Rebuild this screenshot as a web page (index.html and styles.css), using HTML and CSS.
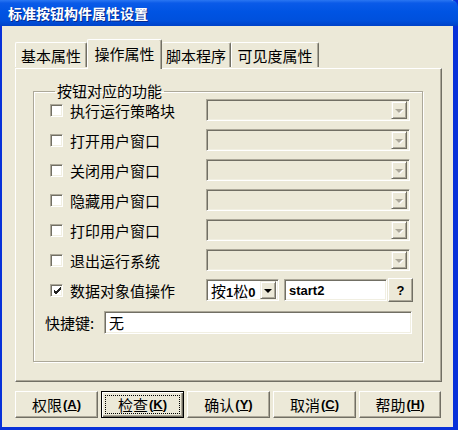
FILE: index.html
```html
<!DOCTYPE html>
<html lang="zh-CN">
<head>
  <meta charset="UTF-8" />
  <title>标准按钮构件属性设置</title>
  <link rel="stylesheet" href="styles.css">
</head>
<body>

  <div class="window">
    <div class="titlebar">标准按钮构件属性设置</div>

    <div class="client">
      <!-- TABS -->
      <div class="tabs">
        <div class="tab t1">基本属性</div>
        <div class="tab t2 active">操作属性</div>
        <div class="tab t3">脚本程序</div>
        <div class="tab t4">可见度属性</div>
      </div>

      <div class="panel">
        <fieldset class="group">
          <legend>按钮对应的功能</legend>

          <div class="row">
            <span class="check"></span>
            <span class="label">执行运行策略块</span>
            <div class="combo disabled"><span class="drop"><i class="arrow"></i></span></div>
          </div>
          <div class="row">
            <span class="check"></span>
            <span class="label">打开用户窗口</span>
            <div class="combo disabled"><span class="drop"><i class="arrow"></i></span></div>
          </div>
          <div class="row">
            <span class="check"></span>
            <span class="label">关闭用户窗口</span>
            <div class="combo disabled"><span class="drop"><i class="arrow"></i></span></div>
          </div>
          <div class="row">
            <span class="check"></span>
            <span class="label">隐藏用户窗口</span>
            <div class="combo disabled"><span class="drop"><i class="arrow"></i></span></div>
          </div>
          <div class="row">
            <span class="check"></span>
            <span class="label">打印用户窗口</span>
            <div class="combo disabled"><span class="drop"><i class="arrow"></i></span></div>
          </div>
          <div class="row">
            <span class="check"></span>
            <span class="label">退出运行系统</span>
            <div class="combo disabled"><span class="drop"><i class="arrow"></i></span></div>
          </div>
          <div class="row">
            <span class="check">
              <svg width="9" height="9" viewBox="0 0 9 9"><path d="M1 4 L3 6 L8 1 M1 5 L3 7 L8 2 M1 6 L3 8 L8 3" stroke="#222" stroke-width="1" fill="none"/></svg>
            </span>
            <span class="label">数据对象值操作</span>
            <div class="combo small"><span class="value">按<b>1</b>松<b>0</b></span><span class="drop"><i class="arrow"></i></span></div>
            <div class="edit var">start2</div>
            <div class="qbtn">?</div>
          </div>

          <div class="row keyrow">
            <span class="keylabel">快捷键:</span>
            <div class="edit key">无</div>
          </div>
        </fieldset>
      </div>

      <!-- BUTTONS -->
      <div class="buttons">
        <div class="btn">权限<span class="acc">(<u>A</u>)</span></div>
        <div class="btn default"><span class="focus">检查<span class="acc">(<u>K</u>)</span></span></div>
        <div class="btn">确认<span class="acc">(<u>Y</u>)</span></div>
        <div class="btn">取消<span class="acc">(<u>C</u>)</span></div>
        <div class="btn">帮助<span class="acc">(<u>H</u>)</span></div>
      </div>
    </div>
  </div>

</body>
</html>
```

FILE: styles.css
```css
/* RESET & BASE */
* {
  box-sizing: border-box;
  margin: 0;
  padding: 0;
}

body {
  font-family: "Noto Sans CJK SC", "Liberation Sans", sans-serif;
  font-size: 15px;
  color: #000;
  background: #0831d9;
  width: 458px;
  height: 430px;
  overflow: hidden;
}

/* WINDOW FRAME */
.window {
  width: 458px;
  height: 430px;
  display: flex;
  flex-direction: column;
  background: #ece9d8;
  border-style: solid;
  border-color: #0831d9;
  border-width: 0 5px 3px 2px;
}

.titlebar {
  height: 26px;
  margin: 0 -5px 0 -2px;
  padding-left: 8px;
  display: flex;
  align-items: center;
  color: #fff;
  font-size: 14px;
  font-weight: bold;
  border-top-right-radius: 7px;
  background: linear-gradient(#2a76f2 0%, #0a5ae8 12%, #0054e3 45%, #0050dc 80%, #0043c8 100%);
  text-shadow: 1px 1px 0 #0a2a8a;
}

.client {
  flex: 1;
  padding: 12px 0 0 13px;
}

/* TABS */
.tabs {
  display: flex;
  align-items: flex-end;
  height: 30px;
  position: relative;
  z-index: 1;
}

.tab {
  height: 25px;
  margin-bottom: 1px;
  display: flex;
  align-items: center;
  justify-content: center;
  background: #ece9d8;
  border-top: 1px solid #fff;
  border-left: 1px solid #fff;
  border-right: 1px solid #716f64;
  border-top-left-radius: 2px;
  border-top-right-radius: 2px;
  box-shadow: inset -1px 0 0 #aca899;
}

.t1 { width: 72px; }
.t2 { width: 75px; }
.t3 { width: 69px; border-left: none; }
.t4 { width: 88px; }

.tab.active {
  height: 30px;
  margin-bottom: -1px;
  padding-bottom: 3px;
}

.panel {
  width: 427px;
  height: 314px;
  padding: 14px 17px 0 17px;
  border-top: 1px solid #fff;
  border-left: 1px solid #fff;
  border-right: 1px solid #716f64;
  border-bottom: 1px solid #716f64;
  box-shadow: inset -1px -1px 0 #aca899;
}

/* GROUP BOX */
.group {
  width: 390px;
  height: 279px;
  padding: 0 0 0 16px;
  border: 1px solid #aca899;
  box-shadow: 1px 1px 0 #fff, inset 1px 1px 0 #fff;
}

.group legend {
  margin-left: 5px;
  padding: 0 2px;
  line-height: 16px;
}

.row {
  display: flex;
  align-items: center;
  height: 22px;
  margin-bottom: 8px;
}

.check {
  width: 13px;
  height: 13px;
  margin-right: 7px;
  display: flex;
  align-items: center;
  justify-content: center;
  background: #fff;
  border-top: 1px solid #aca899;
  border-left: 1px solid #aca899;
  border-right: 1px solid #fff;
  border-bottom: 1px solid #fff;
  box-shadow: inset 1px 1px 0 #716f64, inset -1px -1px 0 #f1efe2;
}

.check svg {
  margin: 1px 0 0 1px;
}

.label {
  width: 136px;
}

/* SUNKEN CONTROLS */
.combo,
.edit {
  height: 22px;
  display: flex;
  align-items: center;
  background: #fff;
  border-top: 1px solid #aca899;
  border-left: 1px solid #aca899;
  border-right: 1px solid #fff;
  border-bottom: 1px solid #fff;
  box-shadow: inset 1px 1px 0 #716f64, inset -1px -1px 0 #f1efe2;
}

.combo {
  width: 204px;
  justify-content: flex-end;
  padding: 2px;
}

.combo.disabled {
  background: #ece9d8;
}

.combo.small {
  width: 73px;
  justify-content: space-between;
  padding-left: 4px;
}

.combo .value {
  font-size: 15px;
  letter-spacing: -1px;
}

.combo .value b {
  font-family: "Liberation Sans", sans-serif;
  font-size: 13px;
  margin: 0 1px;
}

.drop {
  width: 16px;
  height: 18px;
  display: flex;
  align-items: center;
  justify-content: center;
  background: #ece9d8;
  border-top: 1px solid #f1efe2;
  border-left: 1px solid #f1efe2;
  border-right: 1px solid #716f64;
  border-bottom: 1px solid #716f64;
  box-shadow: inset 1px 1px 0 #fff, inset -1px -1px 0 #aca899;
}

.arrow {
  width: 0;
  height: 0;
  border-left: 4px solid transparent;
  border-right: 4px solid transparent;
  border-top: 4px solid #000;
  margin-top: 1px;
}

.disabled .arrow {
  border-top-color: #aca899;
  filter: drop-shadow(1px 1px 0 #fff);
}

.edit {
  padding-left: 4px;
}

.edit.var {
  width: 103px;
  margin-left: 5px;
  font-family: "Liberation Sans", sans-serif;
  font-size: 13px;
  font-weight: bold;
}

.qbtn {
  width: 25px;
  height: 24px;
  margin-left: 1px;
  display: flex;
  align-items: center;
  justify-content: center;
  font-family: "Liberation Sans", sans-serif;
  font-size: 13px;
  font-weight: bold;
  border-top: 1px solid #fff;
  border-left: 1px solid #fff;
  border-right: 1px solid #716f64;
  border-bottom: 1px solid #716f64;
  box-shadow: inset -1px -1px 0 #aca899;
}

.keyrow {
  margin-top: 10px;
  margin-left: -5px;
  height: 23px;
}

.keylabel {
  width: 59px;
}

.edit.key {
  width: 308px;
  height: 23px;
  font-size: 15px;
}

/* BOTTOM BUTTONS */
.buttons {
  display: flex;
  gap: 3px;
  margin-top: 9px;
}

.btn {
  width: 83px;
  height: 27px;
  display: flex;
  align-items: center;
  justify-content: center;
  font-size: 15px;
  border-top: 1px solid #fff;
  border-left: 1px solid #fff;
  border-right: 1px solid #716f64;
  border-bottom: 1px solid #716f64;
  box-shadow: inset -1px -1px 0 #aca899;
}

.btn:last-child {
  width: 82px;
}

.btn .acc {
  font-family: "Liberation Sans", sans-serif;
  font-size: 13px;
  font-weight: bold;
  margin-left: 1px;
}

.btn.default {
  padding: 3px;
  border: 1px solid #000;
  box-shadow: inset 1px 1px 0 #fff, inset -1px -1px 0 #716f64, inset -2px -2px 0 #aca899;
}

.btn .focus {
  flex: 1;
  align-self: stretch;
  display: flex;
  align-items: center;
  justify-content: center;
  border: 1px dotted #000;
}
```
